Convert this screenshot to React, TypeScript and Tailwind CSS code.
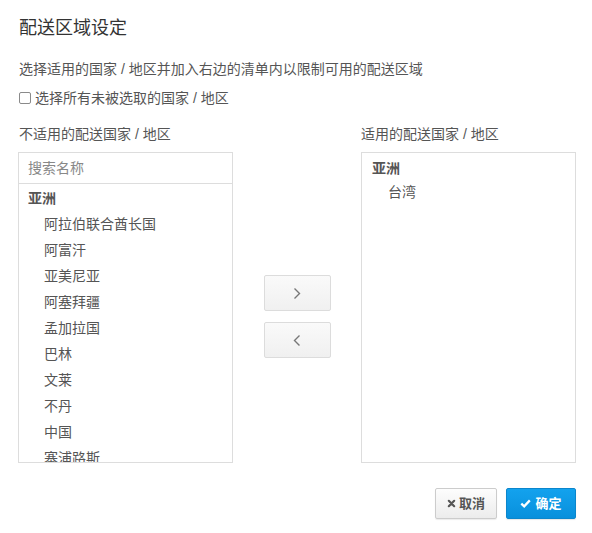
import { useState } from "react";

const countries = [
  "阿拉伯联合酋长国",
  "阿富汗",
  "亚美尼亚",
  "阿塞拜疆",
  "孟加拉国",
  "巴林",
  "文莱",
  "不丹",
  "中国",
  "塞浦路斯",
];

const fontClass =
  "font-['Liberation_Sans','Noto_Sans_CJK_SC',sans-serif]";

function Chevron({ dir }: { dir: "left" | "right" }) {
  return (
    <svg width="8" height="13" viewBox="0 0 8 13" fill="none">
      <path
        d={dir === "right" ? "M1.5 1.5L6.5 6.5L1.5 11.5" : "M6.5 1.5L1.5 6.5L6.5 11.5"}
        stroke="#777"
        strokeWidth="1.4"
      />
    </svg>
  );
}

export default function App() {
  const [checked, setChecked] = useState(false);

  return (
    <div
      className={`${fontClass} h-[533px] w-[592px] bg-white pl-[18px] pr-[16px] pt-[14px] text-[#555]`}
    >
      <h2 className="pl-px text-[18px] leading-[28px] text-[#333]">
        配送区域设定
      </h2>
      <p className="mt-[17px] pl-px text-[14px] leading-[20px]">
        选择适用的国家 / 地区并加入右边的清单内以限制可用的配送区域
      </p>
      <label className="mt-[9px] flex items-center gap-[4px] pl-px text-[14px] leading-[20px]">
        <span
          onClick={() => setChecked(!checked)}
          className="inline-block h-[12px] w-[12px] rounded-[2px] border border-[#8a8a8a] bg-white"
        />
        选择所有未被选取的国家 / 地区
      </label>

      <div className="mt-[17px] flex">
        <div className="w-[215px] shrink-0">
          <div className="mb-[9px] pl-px text-[14px] leading-[18px]">
            不适用的配送国家 / 地区
          </div>
          <div className="h-[311px] overflow-hidden border border-[#ddd]">
            <input
              placeholder="搜索名称"
              className="block h-[31px] w-full border-b border-[#ddd] px-[9px] text-[14px] text-[#555] outline-none placeholder:text-[#888]"
            />
            <div className="pt-px">
              <div className="px-[9px] text-[14px] font-bold leading-[26px] text-[#555]">
                亚洲
              </div>
              {countries.map((c) => (
                <div key={c} className="pl-[25px] text-[14px] leading-[26px]">
                  {c}
                </div>
              ))}
            </div>
          </div>
        </div>

        <div className="flex w-[128px] shrink-0 flex-col items-center gap-[11px] pt-[150px]">
          <button className="flex h-[36px] w-[67px] items-center justify-center rounded-[2px] border border-[#dcdcdc] bg-gradient-to-b from-[#fafafa] to-[#f0f0f0]">
            <Chevron dir="right" />
          </button>
          <button className="flex h-[36px] w-[67px] items-center justify-center rounded-[2px] border border-[#dcdcdc] bg-gradient-to-b from-[#fafafa] to-[#f0f0f0]">
            <Chevron dir="left" />
          </button>
        </div>

        <div className="w-[215px] shrink-0">
          <div className="mb-[9px] text-[14px] leading-[18px]">
            适用的配送国家 / 地区
          </div>
          <div className="h-[311px] border border-[#ddd] pt-[2px]">
            <div className="px-[10px] text-[14px] font-bold leading-[26px]">
              亚洲
            </div>
            <div className="pl-[26px] text-[14px] leading-[22px]">台湾</div>
          </div>
        </div>
      </div>

      <div className="mt-[25px] flex justify-end gap-[9px]">
        <button className="flex h-[31px] w-[62px] items-center justify-center gap-[3px] rounded-[2px] border border-[#ccc] bg-gradient-to-b from-[#fdfdfd] to-[#ececec] text-[13px] font-bold text-[#555] shadow-[0_1px_1px_rgba(0,0,0,0.08)]">
          <svg width="9" height="9" viewBox="0 0 10 10">
            <path d="M2 2L8 8M8 2L2 8" stroke="#555" strokeWidth="2.4" strokeLinecap="round" />
          </svg>
          取消
        </button>
        <button className="flex h-[31px] w-[70px] items-center justify-center gap-[4px] rounded-[2px] border border-[#0b86cc] bg-gradient-to-b from-[#13a2ee] to-[#0890dc] text-[13px] font-bold text-white shadow-[0_1px_1px_rgba(0,0,0,0.1)]">
          <svg width="11" height="9" viewBox="0 0 11 9">
            <path d="M1.3 4.6L4.2 7.3L9.8 1.4" stroke="#fff" strokeWidth="2.3" fill="none" />
          </svg>
          确定
        </button>
      </div>
    </div>
  );
}
